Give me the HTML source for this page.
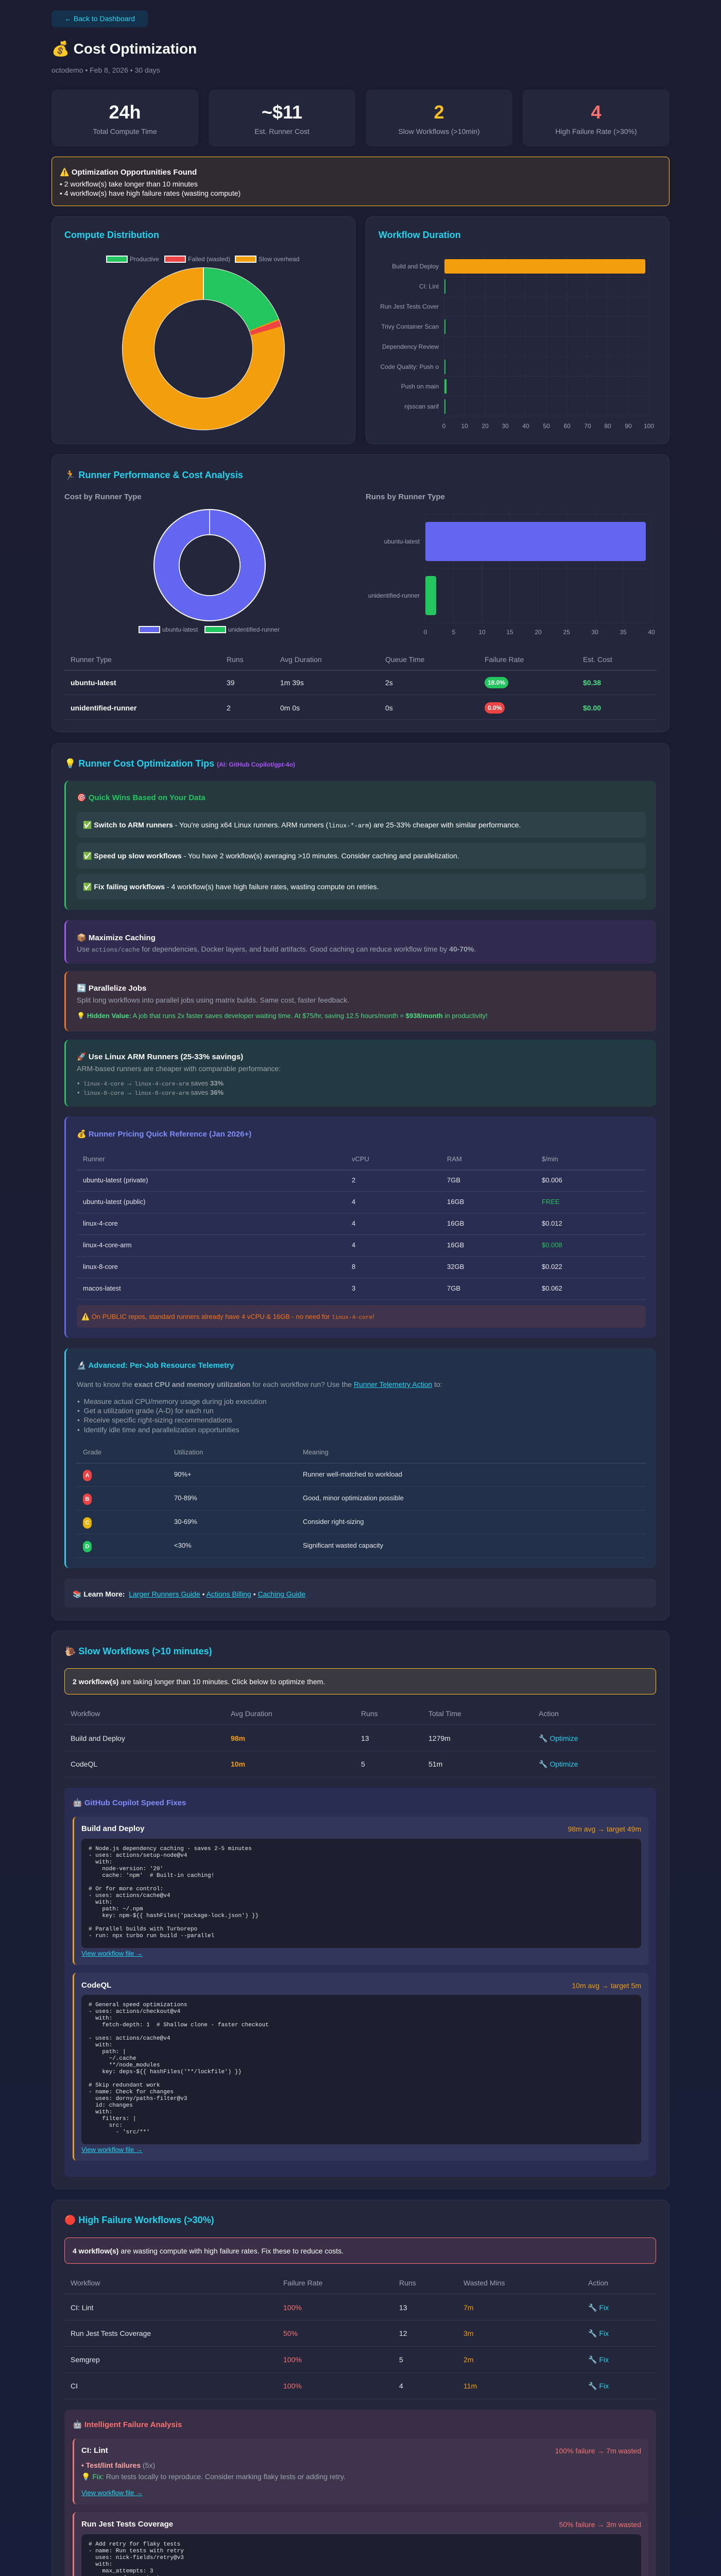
<!DOCTYPE html>
<html><head><meta charset="utf-8">
<style>
*{box-sizing:border-box;margin:0;padding:0}
html,body{width:1400px;height:5391px;overflow:hidden}
body{position:relative;background:linear-gradient(180deg,#1b1c30 0%,#1a1d33 50%,#161e3a 100%);font-family:"Liberation Sans","DejaVu Sans",sans-serif;color:#e5e7eb;font-size:14px}
.a{position:absolute}
.card{position:absolute;left:100px;width:1200px;background:#24273b;border:1px solid #30344c;border-radius:14px}
.h2{position:absolute;left:125px;font-size:18px;font-weight:bold;color:#22d3ee;line-height:24px;white-space:nowrap}
.t{position:absolute;line-height:20px;white-space:nowrap}
.g{color:#9ca3af}
.mono{font-family:"Liberation Mono","DejaVu Sans Mono",monospace}
.box{position:absolute;border-radius:10px}
.lb{border-left:3px solid}
.line{position:absolute;height:1px;background:#363a55}
.code{position:absolute;background:#1e1e2e;border-radius:8px;font-family:"Liberation Mono","DejaVu Sans Mono",monospace;font-size:11px;line-height:13px;color:#e5e7eb;white-space:pre;padding-left:14px}
.lnk{color:#22d3ee;text-decoration:underline}
.pill{display:inline-block;border-radius:11px;padding:0 6px;font-size:12px;line-height:22px;color:#fff;font-weight:bold}
.gr{display:inline-block;width:17px;height:22px;border-radius:9px;text-align:center;line-height:22px;font-size:11px;font-weight:bold;color:#fff}
</style></head><body>

<!-- Header -->
<div class="a" style="left:100px;top:20px;width:187px;height:33px;background:#14304a;border-radius:7px;color:#22d3ee;font-size:14px;line-height:33px;text-align:center">← Back to Dashboard</div>
<div class="t" style="left:100px;top:78px;font-size:28px;line-height:34px;font-weight:bold;color:#fff">💰 Cost Optimization</div>
<div class="t g" style="left:100px;top:126px;color:#8b8fa3">octodemo • Feb 8, 2026 • 30 days</div>

<div class="box" style="left:100px;top:174px;width:285px;height:110px;background:#24273b"><div class="t" style="left:0;width:285px;text-align:center;top:22px;font-size:36px;line-height:44px;font-weight:bold;color:#fff">24h</div><div class="t g" style="left:0;width:285px;text-align:center;top:71px">Total Compute Time</div></div>
<div class="box" style="left:405px;top:174px;width:285px;height:110px;background:#24273b"><div class="t" style="left:0;width:285px;text-align:center;top:22px;font-size:36px;line-height:44px;font-weight:bold;color:#fff">~$11</div><div class="t g" style="left:0;width:285px;text-align:center;top:71px">Est. Runner Cost</div></div>
<div class="box" style="left:710px;top:174px;width:285px;height:110px;background:#24273b"><div class="t" style="left:0;width:285px;text-align:center;top:22px;font-size:36px;line-height:44px;font-weight:bold;color:#fbbf24">2</div><div class="t g" style="left:0;width:285px;text-align:center;top:71px">Slow Workflows (&gt;10min)</div></div>
<div class="box" style="left:1015px;top:174px;width:285px;height:110px;background:#24273b"><div class="t" style="left:0;width:285px;text-align:center;top:22px;font-size:36px;line-height:44px;font-weight:bold;color:#f87171">4</div><div class="t g" style="left:0;width:285px;text-align:center;top:71px">High Failure Rate (&gt;30%)</div></div>

<div class="box" style="left:100px;top:304px;width:1200px;height:96px;background:#2f2b30;border:1px solid #fbbf24;border-radius:8px"></div>
<div class="t" style="left:116px;top:325px;font-weight:bold;font-size:15px;color:#fff">⚠️ Optimization Opportunities Found</div>
<div class="t" style="left:116px;top:347px;color:#fff">• 2 workflow(s) take longer than 10 minutes</div>
<div class="t" style="left:116px;top:365px;color:#fff">• 4 workflow(s) have high failure rates (wasting compute)</div>

<!-- Chart cards -->
<div class="card" style="top:420px;width:590px;height:442px"></div>
<div class="h2" style="top:444px">Compute Distribution</div>
<svg class="a" style="left:100px;top:420px" width="590" height="442">
 <rect x="107" y="77" width="40" height="12" fill="#22c55e" stroke="#fff" stroke-width="2"/><text x="152" y="87" font-size="12" fill="#9ca3af" font-family="Liberation Sans">Productive</text>
 <rect x="220" y="77" width="40" height="12" fill="#ef4444" stroke="#fff" stroke-width="2"/><text x="265" y="87" font-size="12" fill="#9ca3af" font-family="Liberation Sans">Failed (wasted)</text>
 <rect x="357" y="77" width="40" height="12" fill="#f59e0b" stroke="#fff" stroke-width="2"/><text x="402" y="87" font-size="12" fill="#9ca3af" font-family="Liberation Sans">Slow overhead</text>
 <g transform="translate(295,257) rotate(-90)">
  <circle r="158" fill="#fff"/>
  <circle r="126.5" fill="none" stroke="#f59e0b" stroke-width="61"/>
  <circle r="126.5" fill="none" stroke="#22c55e" stroke-width="61" stroke-dasharray="151 700"/>
  <circle r="126.5" fill="none" stroke="#ef4444" stroke-width="61" stroke-dasharray="0 153 10 700"/>
  <circle r="95" fill="#24273b"/>
  <line x1="95" y1="0" x2="158" y2="0" stroke="#fff" stroke-width="2"/>
 </g>
</svg>

<div class="card" style="left:710px;top:420px;width:590px;height:442px"></div>
<div class="h2" style="left:735px;top:444px">Workflow Duration</div>
<svg class="a" style="left:710px;top:420px" width="590" height="442" font-family="Liberation Sans" font-size="12">
 <g stroke="#2c2f45" stroke-width="1">
  <line x1="152" y1="78" x2="152" y2="388"/><line x1="192" y1="78" x2="192" y2="388"/><line x1="232" y1="78" x2="232" y2="388"/><line x1="271" y1="78" x2="271" y2="388"/><line x1="311" y1="78" x2="311" y2="388"/><line x1="351" y1="78" x2="351" y2="388"/><line x1="391" y1="78" x2="391" y2="388"/><line x1="431" y1="78" x2="431" y2="388"/><line x1="470" y1="78" x2="470" y2="388"/><line x1="510" y1="78" x2="510" y2="388"/><line x1="550" y1="78" x2="550" y2="388"/>
  <line x1="152" y1="78" x2="550" y2="78"/><line x1="152" y1="117" x2="550" y2="117"/><line x1="152" y1="156" x2="550" y2="156"/><line x1="152" y1="194" x2="550" y2="194"/><line x1="152" y1="233" x2="550" y2="233"/><line x1="152" y1="272" x2="550" y2="272"/><line x1="152" y1="310" x2="550" y2="310"/><line x1="152" y1="349" x2="550" y2="349"/><line x1="152" y1="388" x2="550" y2="388"/>
 </g>
 <rect x="153" y="83" width="390" height="28" rx="3" fill="#f59e0b"/>
 <rect x="153" y="122" width="2" height="28" fill="#22c55e"/>
 <rect x="153" y="200" width="2" height="28" fill="#22c55e"/>
 <rect x="153" y="278" width="2" height="28" fill="#22c55e"/>
 <rect x="153" y="316" width="4" height="28" rx="1" fill="#22c55e"/>
 <rect x="153" y="355" width="2" height="28" fill="#22c55e"/>
 <g fill="#9ca3af" text-anchor="end">
  <text x="142" y="101">Build and Deploy</text><text x="142" y="140">CI: Lint</text><text x="142" y="179">Run Jest Tests Cover</text><text x="142" y="218">Trivy Container Scan</text><text x="142" y="257">Dependency Review</text><text x="142" y="296">Code Quality: Push o</text><text x="142" y="334">Push on main</text><text x="142" y="373">njsscan sarif</text>
 </g>
 <g fill="#9ca3af" text-anchor="middle">
  <text x="152" y="411">0</text><text x="192" y="411">10</text><text x="232" y="411">20</text><text x="271" y="411">30</text><text x="311" y="411">40</text><text x="351" y="411">50</text><text x="391" y="411">60</text><text x="431" y="411">70</text><text x="470" y="411">80</text><text x="510" y="411">90</text><text x="550" y="411">100</text>
 </g>
</svg>

<!-- Runner card -->
<div class="card" style="top:882px;height:539px"></div>
<div class="h2" style="top:910px">🏃 Runner Performance &amp; Cost Analysis</div>
<div class="t" style="left:125px;top:955px;font-weight:bold;font-size:15px;color:#9ca3af">Cost by Runner Type</div>
<div class="t" style="left:710px;top:955px;font-weight:bold;font-size:15px;color:#9ca3af">Runs by Runner Type</div>
<svg class="a" style="left:0;top:882px" width="1400" height="380" font-family="Liberation Sans" font-size="12">
 <circle cx="407" cy="215" r="109" fill="#fff"/>
 <circle cx="407" cy="215" r="83.5" fill="none" stroke="#6366f1" stroke-width="47"/>
 <circle cx="407" cy="215" r="59" fill="#24273b" stroke="#fff" stroke-width="1.5"/>
 <line x1="407" y1="106" x2="407" y2="156" stroke="#fff" stroke-width="1.5"/>
 <rect x="270" y="334" width="40" height="12" fill="#6366f1" stroke="#fff" stroke-width="2"/><text x="315" y="344" fill="#9ca3af">ubuntu-latest</text>
 <rect x="398" y="334" width="40" height="12" fill="#22c55e" stroke="#fff" stroke-width="2"/><text x="443" y="344" fill="#9ca3af">unidentified-runner</text>
 <g stroke="#2c2f45">
  <line x1="826" y1="116" x2="826" y2="327"/><line x1="881" y1="116" x2="881" y2="327"/><line x1="936" y1="116" x2="936" y2="327"/><line x1="990" y1="116" x2="990" y2="327"/><line x1="1045" y1="116" x2="1045" y2="327"/><line x1="1100" y1="116" x2="1100" y2="327"/><line x1="1155" y1="116" x2="1155" y2="327"/><line x1="1210" y1="116" x2="1210" y2="327"/><line x1="1265" y1="116" x2="1265" y2="327"/>
  <line x1="826" y1="116" x2="1265" y2="116"/><line x1="826" y1="221" x2="1265" y2="221"/><line x1="826" y1="327" x2="1265" y2="327"/>
 </g>
 <rect x="826" y="131" width="428" height="76" rx="4" fill="#6366f1"/>
 <rect x="826" y="236" width="21" height="76" rx="4" fill="#22c55e"/>
 <g fill="#9ca3af" text-anchor="end"><text x="815" y="173">ubuntu-latest</text><text x="815" y="278">unidentified-runner</text></g>
 <g fill="#9ca3af" text-anchor="middle"><text x="826" y="349">0</text><text x="881" y="349">5</text><text x="936" y="349">10</text><text x="990" y="349">15</text><text x="1045" y="349">20</text><text x="1100" y="349">25</text><text x="1155" y="349">30</text><text x="1210" y="349">35</text><text x="1265" y="349">40</text></g>
</svg>
<div class="t g" style="left:137px;top:1270px">Runner Type</div><div class="t g" style="left:440px;top:1270px">Runs</div><div class="t g" style="left:544px;top:1270px">Avg Duration</div><div class="t g" style="left:748px;top:1270px">Queue Time</div><div class="t g" style="left:941px;top:1270px">Failure Rate</div><div class="t g" style="left:1132px;top:1270px">Est. Cost</div>
<div class="line" style="left:125px;width:1150px;top:1300px;height:2px"></div>
<div class="t" style="left:137px;top:1315px;font-weight:bold;color:#fff">ubuntu-latest</div><div class="t" style="left:440px;top:1315px">39</div><div class="t" style="left:544px;top:1315px">1m 39s</div><div class="t" style="left:748px;top:1315px">2s</div><div class="t" style="left:941px;top:1314px"><span class="pill" style="background:#22c55e">18.0%</span></div><div class="t" style="left:1132px;top:1315px;font-weight:bold;color:#4ade80">$0.38</div>
<div class="line" style="left:125px;width:1150px;top:1348px"></div>
<div class="t" style="left:137px;top:1364px;font-weight:bold;color:#fff">unidentified-runner</div><div class="t" style="left:440px;top:1364px">2</div><div class="t" style="left:544px;top:1364px">0m 0s</div><div class="t" style="left:748px;top:1364px">0s</div><div class="t" style="left:941px;top:1363px"><span class="pill" style="background:#ef4444">0.0%</span></div><div class="t" style="left:1132px;top:1364px;font-weight:bold;color:#4ade80">$0.00</div>
<div class="line" style="left:125px;width:1150px;top:1396px"></div>

<!-- Tips card -->
<div class="card" style="top:1442px;height:1703px"></div>
<div class="h2" style="top:1470px">💡 Runner Cost Optimization Tips <span style="font-size:12px;color:#a855f7">(AI: GitHub Copilot/gpt-4o)</span></div>

<div class="box lb" style="left:125px;top:1515px;width:1149px;height:251px;background:#25393f;border-color:#22c55e"></div>
<div class="t" style="left:149px;top:1539px;font-weight:bold;font-size:15px;color:#22c55e">🎯 Quick Wins Based on Your Data</div>
<div class="box" style="left:149px;top:1576px;width:1105px;height:50px;background:#2d4149;border-radius:8px"></div>
<div class="t" style="left:161px;top:1591px;color:#fff">✅ <b>Switch to ARM runners</b> - You're using x64 Linux runners. ARM runners (<span class="mono" style="font-size:12px">linux-*-arm</span>) are 25-33% cheaper with similar performance.</div>
<div class="box" style="left:149px;top:1636px;width:1105px;height:50px;background:#2d4149;border-radius:8px"></div>
<div class="t" style="left:161px;top:1651px;color:#fff">✅ <b>Speed up slow workflows</b> - You have 2 workflow(s) averaging &gt;10 minutes. Consider caching and parallelization.</div>
<div class="box" style="left:149px;top:1696px;width:1105px;height:50px;background:#2d4149;border-radius:8px"></div>
<div class="t" style="left:161px;top:1711px;color:#fff">✅ <b>Fix failing workflows</b> - 4 workflow(s) have high failure rates, wasting compute on retries.</div>

<div class="box lb" style="left:125px;top:1786px;width:1149px;height:84px;background:#302b4f;border-color:#a855f7"></div>
<div class="t" style="left:149px;top:1811px;font-weight:bold;font-size:15px;color:#fff">📦 Maximize Caching</div>
<div class="t g" style="left:149px;top:1832px">Use <span class="mono" style="font-size:12px">actions/cache</span> for dependencies, Docker layers, and build artifacts. Good caching can reduce workflow time by <b>40-70%</b>.</div>

<div class="box lb" style="left:125px;top:1885px;width:1149px;height:117px;background:#3a2f3e;border-color:#f97316"></div>
<div class="t" style="left:149px;top:1909px;font-weight:bold;font-size:15px;color:#fff">🔄 Parallelize Jobs</div>
<div class="t g" style="left:149px;top:1931px">Split long workflows into parallel jobs using matrix builds. Same cost, faster feedback.</div>
<div class="t" style="left:149px;top:1962px;font-size:13px;color:#4ade80">💡 <b>Hidden Value:</b> A job that runs 2x faster saves developer waiting time. At $75/hr, saving 12.5 hours/month = <b>$938/month</b> in productivity!</div>

<div class="box lb" style="left:125px;top:2018px;width:1149px;height:130px;background:#243a42;border-color:#22c55e"></div>
<div class="t" style="left:149px;top:2042px;font-weight:bold;font-size:15px;color:#fff">🚀 Use Linux ARM Runners (25-33% savings)</div>
<div class="t g" style="left:149px;top:2064px">ARM-based runners are cheaper with comparable performance:</div>
<div class="t g" style="left:150px;top:2093px;font-size:13px">•&nbsp; <span class="mono" style="font-size:11px">linux-4-core</span> → <span class="mono" style="font-size:11px">linux-4-core-arm</span> saves <b>33%</b></div>
<div class="t g" style="left:150px;top:2111px;font-size:13px">•&nbsp; <span class="mono" style="font-size:11px">linux-8-core</span> → <span class="mono" style="font-size:11px">linux-8-core-arm</span> saves <b>36%</b></div>

<div class="box lb" style="left:125px;top:2167px;width:1149px;height:430px;background:#2a2d52;border-color:#6366f1"></div>
<div class="t" style="left:149px;top:2192px;font-weight:bold;font-size:15px;color:#818cf8">💰 Runner Pricing Quick Reference (Jan 2026+)</div>
<div class="t g" style="left:161px;top:2240px;font-size:13px">Runner</div><div class="t g" style="left:683px;top:2240px;font-size:13px">vCPU</div><div class="t g" style="left:868px;top:2240px;font-size:13px">RAM</div><div class="t g" style="left:1052px;top:2240px;font-size:13px">$/min</div>
<div class="line" style="left:149px;width:1105px;top:2270px;height:2px;background:#3b3f66"></div>
<div class="t" style="left:161px;top:2281px;font-size:13px">ubuntu-latest (private)</div><div class="t" style="left:683px;top:2281px;font-size:13px">2</div><div class="t" style="left:868px;top:2281px;font-size:13px">7GB</div><div class="t" style="left:1052px;top:2281px;font-size:13px">$0.006</div>
<div class="line" style="left:149px;width:1105px;top:2312px;background:#3b3f66"></div>
<div class="t" style="left:161px;top:2323px;font-size:13px">ubuntu-latest (public)</div><div class="t" style="left:683px;top:2323px;font-size:13px">4</div><div class="t" style="left:868px;top:2323px;font-size:13px">16GB</div><div class="t" style="left:1052px;top:2323px;font-size:13px;color:#22c55e">FREE</div>
<div class="line" style="left:149px;width:1105px;top:2354px;background:#3b3f66"></div>
<div class="t" style="left:161px;top:2365px;font-size:13px">linux-4-core</div><div class="t" style="left:683px;top:2365px;font-size:13px">4</div><div class="t" style="left:868px;top:2365px;font-size:13px">16GB</div><div class="t" style="left:1052px;top:2365px;font-size:13px">$0.012</div>
<div class="line" style="left:149px;width:1105px;top:2396px;background:#3b3f66"></div>
<div class="t" style="left:161px;top:2407px;font-size:13px">linux-4-core-arm</div><div class="t" style="left:683px;top:2407px;font-size:13px">4</div><div class="t" style="left:868px;top:2407px;font-size:13px">16GB</div><div class="t" style="left:1052px;top:2407px;font-size:13px;color:#22c55e">$0.008</div>
<div class="line" style="left:149px;width:1105px;top:2438px;background:#3b3f66"></div>
<div class="t" style="left:161px;top:2449px;font-size:13px">linux-8-core</div><div class="t" style="left:683px;top:2449px;font-size:13px">8</div><div class="t" style="left:868px;top:2449px;font-size:13px">32GB</div><div class="t" style="left:1052px;top:2449px;font-size:13px">$0.022</div>
<div class="line" style="left:149px;width:1105px;top:2480px;background:#3b3f66"></div>
<div class="t" style="left:161px;top:2491px;font-size:13px">macos-latest</div><div class="t" style="left:683px;top:2491px;font-size:13px">3</div><div class="t" style="left:868px;top:2491px;font-size:13px">7GB</div><div class="t" style="left:1052px;top:2491px;font-size:13px">$0.062</div>
<div class="line" style="left:149px;width:1105px;top:2522px;background:#3b3f66"></div>
<div class="box" style="left:149px;top:2533px;width:1105px;height:44px;background:#3e344e;border-radius:8px"></div>
<div class="t" style="left:158px;top:2546px;font-size:13px;color:#f97316">⚠️ On PUBLIC repos, standard runners already have 4 vCPU &amp; 16GB - no need for <span class="mono" style="font-size:11px">linux-4-core</span>!</div>

<div class="box lb" style="left:125px;top:2617px;width:1149px;height:427px;background:#223049;border-color:#22d3ee"></div>
<div class="t" style="left:149px;top:2641px;font-weight:bold;font-size:15px;color:#22d3ee">🔬 Advanced: Per-Job Resource Telemetry</div>
<div class="t g" style="left:149px;top:2677px">Want to know the <b>exact CPU and memory utilization</b> for each workflow run? Use the <span class="lnk">Runner Telemetry Action</span> to:</div>
<div class="t g" style="left:150px;top:2710px">•&nbsp; Measure actual CPU/memory usage during job execution</div>
<div class="t g" style="left:150px;top:2728px">•&nbsp; Get a utilization grade (A-D) for each run</div>
<div class="t g" style="left:150px;top:2746px">•&nbsp; Receive specific right-sizing recommendations</div>
<div class="t g" style="left:150px;top:2765px">•&nbsp; Identify idle time and parallelization opportunities</div>
<div class="t g" style="left:161px;top:2809px;font-size:13px">Grade</div><div class="t g" style="left:338px;top:2809px;font-size:13px">Utilization</div><div class="t g" style="left:588px;top:2809px;font-size:13px">Meaning</div>
<div class="line" style="left:149px;width:1105px;top:2839px;height:2px;background:#34405e"></div>
<div class="t" style="left:161px;top:2852px"><span class="gr" style="background:#ef4444">A</span></div><div class="t" style="left:338px;top:2852px;font-size:13px">90%+</div><div class="t" style="left:588px;top:2852px;font-size:13px">Runner well-matched to workload</div>
<div class="line" style="left:149px;width:1105px;top:2885px;background:#34405e"></div>
<div class="t" style="left:161px;top:2898px"><span class="gr" style="background:#ef4444">B</span></div><div class="t" style="left:338px;top:2898px;font-size:13px">70-89%</div><div class="t" style="left:588px;top:2898px;font-size:13px">Good, minor optimization possible</div>
<div class="line" style="left:149px;width:1105px;top:2931px;background:#34405e"></div>
<div class="t" style="left:161px;top:2944px"><span class="gr" style="background:#eab308">C</span></div><div class="t" style="left:338px;top:2944px;font-size:13px">30-69%</div><div class="t" style="left:588px;top:2944px;font-size:13px">Consider right-sizing</div>
<div class="line" style="left:149px;width:1105px;top:2977px;background:#34405e"></div>
<div class="t" style="left:161px;top:2990px"><span class="gr" style="background:#22c55e">D</span></div><div class="t" style="left:338px;top:2990px;font-size:13px">&lt;30%</div><div class="t" style="left:588px;top:2990px;font-size:13px">Significant wasted capacity</div>
<div class="line" style="left:149px;width:1105px;top:3023px;background:#34405e"></div>

<div class="box" style="left:125px;top:3064px;width:1149px;height:56px;background:#2b2f48;border-radius:8px"></div>
<div class="t" style="left:141px;top:3084px"><b style="color:#fff">📚 Learn More:</b>&nbsp; <span class="lnk">Larger Runners Guide</span> • <span class="lnk">Actions Billing</span> • <span class="lnk">Caching Guide</span></div>

<!-- Slow workflows -->
<div class="card" style="top:3165px;height:1084px"></div>
<div class="h2" style="top:3193px">🐌 Slow Workflows (&gt;10 minutes)</div>
<div class="box" style="left:125px;top:3238px;width:1149px;height:51px;background:#3a393f;border:1px solid #fbbf24;border-radius:8px"></div>
<div class="t" style="left:141px;top:3254px;color:#fff"><b>2 workflow(s)</b> are taking longer than 10 minutes. Click below to optimize them.</div>
<div class="t g" style="left:137px;top:3316px">Workflow</div><div class="t g" style="left:448px;top:3316px">Avg Duration</div><div class="t g" style="left:701px;top:3316px">Runs</div><div class="t g" style="left:832px;top:3316px">Total Time</div><div class="t g" style="left:1046px;top:3316px">Action</div>
<div class="line" style="left:125px;width:1150px;top:3347px"></div>
<div class="t" style="left:137px;top:3364px">Build and Deploy</div><div class="t" style="left:448px;top:3364px;color:#f59e0b;font-weight:bold">98m</div><div class="t" style="left:701px;top:3364px">13</div><div class="t" style="left:832px;top:3364px">1279m</div><div class="t" style="left:1046px;top:3364px;color:#22d3ee">🔧 Optimize</div>
<div class="line" style="left:125px;width:1150px;top:3398px"></div>
<div class="t" style="left:137px;top:3414px">CodeQL</div><div class="t" style="left:448px;top:3414px;color:#f59e0b;font-weight:bold">10m</div><div class="t" style="left:701px;top:3414px">5</div><div class="t" style="left:832px;top:3414px">51m</div><div class="t" style="left:1046px;top:3414px;color:#22d3ee">🔧 Optimize</div>
<div class="line" style="left:125px;width:1150px;top:3449px"></div>

<div class="box" style="left:125px;top:3470px;width:1149px;height:755px;background:#2a2e54"></div>
<div class="t" style="left:141px;top:3490px;font-weight:bold;font-size:15px;color:#818cf8">🤖 GitHub Copilot Speed Fixes</div>
<div class="box lb" style="left:141px;top:3526px;width:1118px;height:288px;background:#31365a;border-color:#f59e0b;border-radius:8px"></div>
<div class="t" style="left:158px;top:3540px;font-weight:bold;font-size:15px;color:#fff">Build and Deploy</div>
<div class="t" style="left:1000px;width:245px;text-align:right;top:3540px;color:#f59e0b">98m avg → target 49m</div>
<div class="code" style="left:158px;top:3569px;width:1087px;height:212px;padding-top:14px"># Node.js dependency caching - saves 2-5 minutes
- uses: actions/setup-node@v4
  with:
    node-version: '20'
    cache: 'npm'  # Built-in caching!

# Or for more control:
- uses: actions/cache@v4
  with:
    path: ~/.npm
    key: npm-${{ hashFiles('package-lock.json') }}

# Parallel builds with Turborepo
- run: npx turbo run build --parallel</div>
<div class="t lnk" style="left:158px;top:3782px;font-size:13px">View workflow file →</div>

<div class="box lb" style="left:141px;top:3829px;width:1118px;height:365px;background:#31365a;border-color:#f59e0b;border-radius:8px"></div>
<div class="t" style="left:158px;top:3844px;font-weight:bold;font-size:15px;color:#fff">CodeQL</div>
<div class="t" style="left:1000px;width:245px;text-align:right;top:3844px;color:#f59e0b">10m avg → target 5m</div>
<div class="code" style="left:158px;top:3872px;width:1087px;height:290px;padding-top:14px"># General speed optimizations
- uses: actions/checkout@v4
  with:
    fetch-depth: 1  # Shallow clone - faster checkout

- uses: actions/cache@v4
  with:
    path: |
      ~/.cache
      **/node_modules
    key: deps-${{ hashFiles('**/lockfile') }}

# Skip redundant work
- name: Check for changes
  uses: dorny/paths-filter@v3
  id: changes
  with:
    filters: |
      src:
        - 'src/**'</div>
<div class="t lnk" style="left:158px;top:4163px;font-size:13px">View workflow file →</div>

<!-- High failure -->
<div class="card" style="top:4270px;height:1080px"></div>
<div class="h2" style="top:4297px">🔴 High Failure Workflows (&gt;30%)</div>
<div class="box" style="left:125px;top:4343px;width:1149px;height:51px;background:#3a3048;border:1px solid #f87171;border-radius:8px"></div>
<div class="t" style="left:141px;top:4359px;color:#fff"><b>4 workflow(s)</b> are wasting compute with high failure rates. Fix these to reduce costs.</div>
<div class="t g" style="left:137px;top:4421px">Workflow</div><div class="t g" style="left:550px;top:4421px">Failure Rate</div><div class="t g" style="left:775px;top:4421px">Runs</div><div class="t g" style="left:900px;top:4421px">Wasted Mins</div><div class="t g" style="left:1142px;top:4421px">Action</div>
<div class="line" style="left:125px;width:1150px;top:4452px"></div>
<div class="t" style="left:137px;top:4469px">CI: Lint</div><div class="t" style="left:550px;top:4469px;color:#f87171">100%</div><div class="t" style="left:775px;top:4469px">13</div><div class="t" style="left:900px;top:4469px;color:#f59e0b">7m</div><div class="t" style="left:1142px;top:4469px;color:#22d3ee">🔧 Fix</div>
<div class="line" style="left:125px;width:1150px;top:4503px"></div>
<div class="t" style="left:137px;top:4519px">Run Jest Tests Coverage</div><div class="t" style="left:550px;top:4519px;color:#f87171">50%</div><div class="t" style="left:775px;top:4519px">12</div><div class="t" style="left:900px;top:4519px;color:#f59e0b">3m</div><div class="t" style="left:1142px;top:4519px;color:#22d3ee">🔧 Fix</div>
<div class="line" style="left:125px;width:1150px;top:4554px"></div>
<div class="t" style="left:137px;top:4570px">Semgrep</div><div class="t" style="left:550px;top:4570px;color:#f87171">100%</div><div class="t" style="left:775px;top:4570px">5</div><div class="t" style="left:900px;top:4570px;color:#f59e0b">2m</div><div class="t" style="left:1142px;top:4570px;color:#22d3ee">🔧 Fix</div>
<div class="line" style="left:125px;width:1150px;top:4605px"></div>
<div class="t" style="left:137px;top:4621px">CI</div><div class="t" style="left:550px;top:4621px;color:#f87171">100%</div><div class="t" style="left:775px;top:4621px">4</div><div class="t" style="left:900px;top:4621px;color:#f59e0b">11m</div><div class="t" style="left:1142px;top:4621px;color:#22d3ee">🔧 Fix</div>
<div class="line" style="left:125px;width:1150px;top:4656px"></div>

<div class="box" style="left:125px;top:4677px;width:1149px;height:649px;background:#372d45"></div>
<div class="t" style="left:141px;top:4697px;font-weight:bold;font-size:15px;color:#f87171">🤖 Intelligent Failure Analysis</div>

<div class="box lb" style="left:141px;top:4733px;width:1118px;height:128px;background:#3e344c;border-color:#f87171;border-radius:8px"></div>
<div class="t" style="left:158px;top:4747px;font-weight:bold;font-size:15px;color:#fff">CI: Lint</div>
<div class="t" style="left:1000px;width:245px;text-align:right;top:4747px;color:#f87171">100% failure → 7m wasted</div>
<div class="t" style="left:158px;top:4775px"><b style="color:#fca5a5">• Test/lint failures</b> <span class="g">(5x)</span></div>
<div class="t g" style="left:158px;top:4797px">💡 <span style="color:#4ade80">Fix:</span> Run tests locally to reproduce. Consider marking flaky tests or adding retry.</div>
<div class="t lnk" style="left:158px;top:4829px;font-size:13px">View workflow file →</div>

<div class="box lb" style="left:141px;top:4876px;width:1118px;height:184px;background:#3e344c;border-color:#f87171;border-radius:8px"></div>
<div class="t" style="left:158px;top:4890px;font-weight:bold;font-size:15px;color:#fff">Run Jest Tests Coverage</div>
<div class="t" style="left:1000px;width:245px;text-align:right;top:4890px;color:#f87171">50% failure → 3m wasted</div>
<div class="code" style="left:158px;top:4919px;width:1087px;height:108px;padding-top:14px"># Add retry for flaky tests
- name: Run tests with retry
  uses: nick-fields/retry@v3
  with:
    max_attempts: 3
    command: npm test</div>
<div class="t lnk" style="left:158px;top:5028px;font-size:13px">View workflow file →</div>

<div class="box lb" style="left:141px;top:5075px;width:1118px;height:221px;background:#3e344c;border-color:#f87171;border-radius:8px"></div>
<div class="t" style="left:158px;top:5089px;font-weight:bold;font-size:15px;color:#fff">Semgrep</div>
<div class="t" style="left:1000px;width:245px;text-align:right;top:5089px;color:#f87171">100% failure → 2m wasted</div>
<div class="t" style="left:158px;top:5117px"><b style="color:#fca5a5">• SARIF/scan upload failed</b> <span class="g">(5x)</span></div>
<div class="t g" style="left:158px;top:5138px">💡 <span style="color:#4ade80">Fix:</span> Add `security-events: write` permission to your workflow:</div>
<div class="code" style="left:158px;top:5167px;width:1087px;height:59px;padding-top:11px;padding-left:10px;color:#9ca3af;font-size:10.5px">permissions:
  security-events: write
  contents: read</div>
<div class="t g" style="left:158px;top:5234px">Also ensure GitHub Advanced Security is enabled for the repository.</div>
<div class="t lnk" style="left:158px;top:5264px;font-size:13px">View workflow file →</div>

</body></html>
